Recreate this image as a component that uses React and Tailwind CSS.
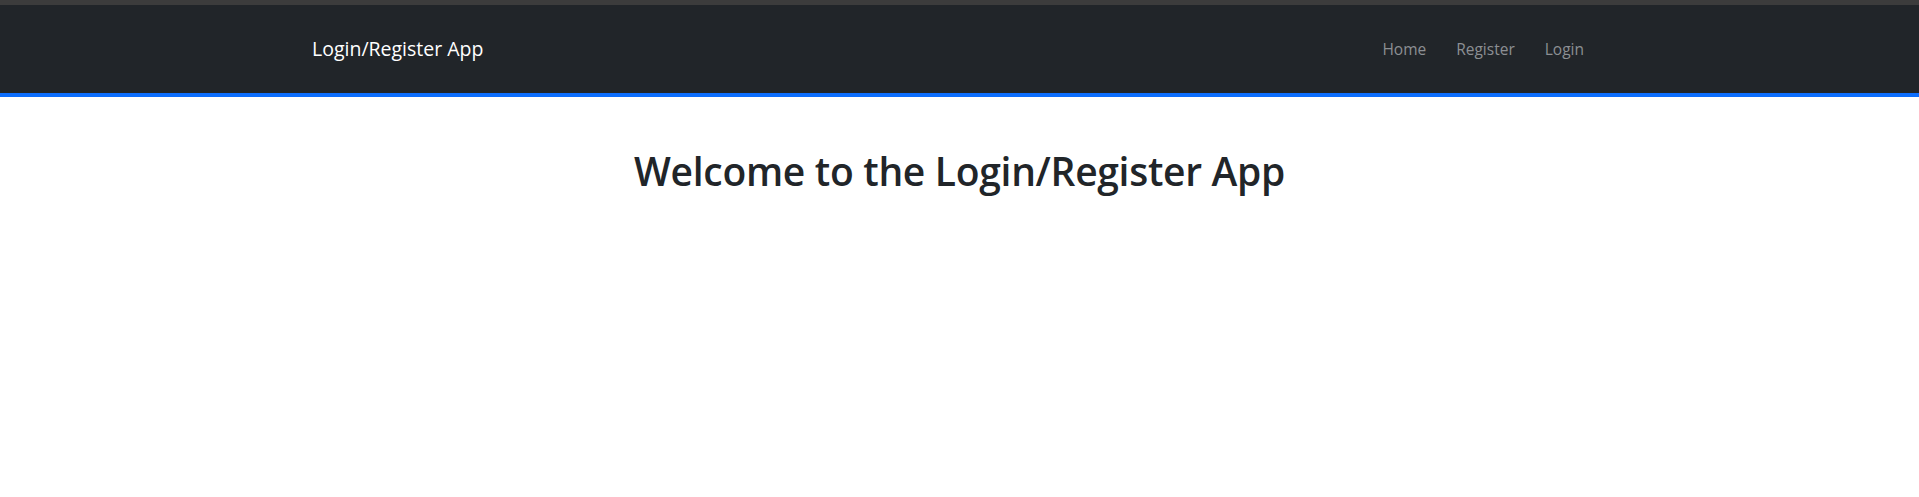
export default function App() {
  return (
    <div className="min-h-[497px] bg-white" style={{ fontFamily: '"Open Sans", "Noto Sans", sans-serif' }}>
      {/* strip above the navbar */}
      <div className="h-[5px] bg-[#3c3c3c]"></div>

      <nav className="h-[92px] bg-[#212529] border-b-4 border-[#0d6efd] flex items-center">
        <a className="ml-[312px] text-[19.5px] text-white" href="#">
          Login/Register App
        </a>
        <ul className="ml-auto mr-[320px] flex items-center">
          <li><a className="px-[15px] text-[15.5px] text-[#8c8f93]" href="#">Home</a></li>
          <li><a className="px-[15px] text-[15.5px] text-[#8c8f93]" href="#">Register</a></li>
          <li><a className="px-[15px] text-[15.5px] text-[#8c8f93]" href="#">Login</a></li>
        </ul>
      </nav>

      <div className="pt-[51px] text-center">
        <h1 className="text-[39px] leading-[1.2] font-semibold tracking-[-0.3px] text-[#212529]">
          Welcome to the Login/Register App
        </h1>
      </div>
    </div>
  );
}
